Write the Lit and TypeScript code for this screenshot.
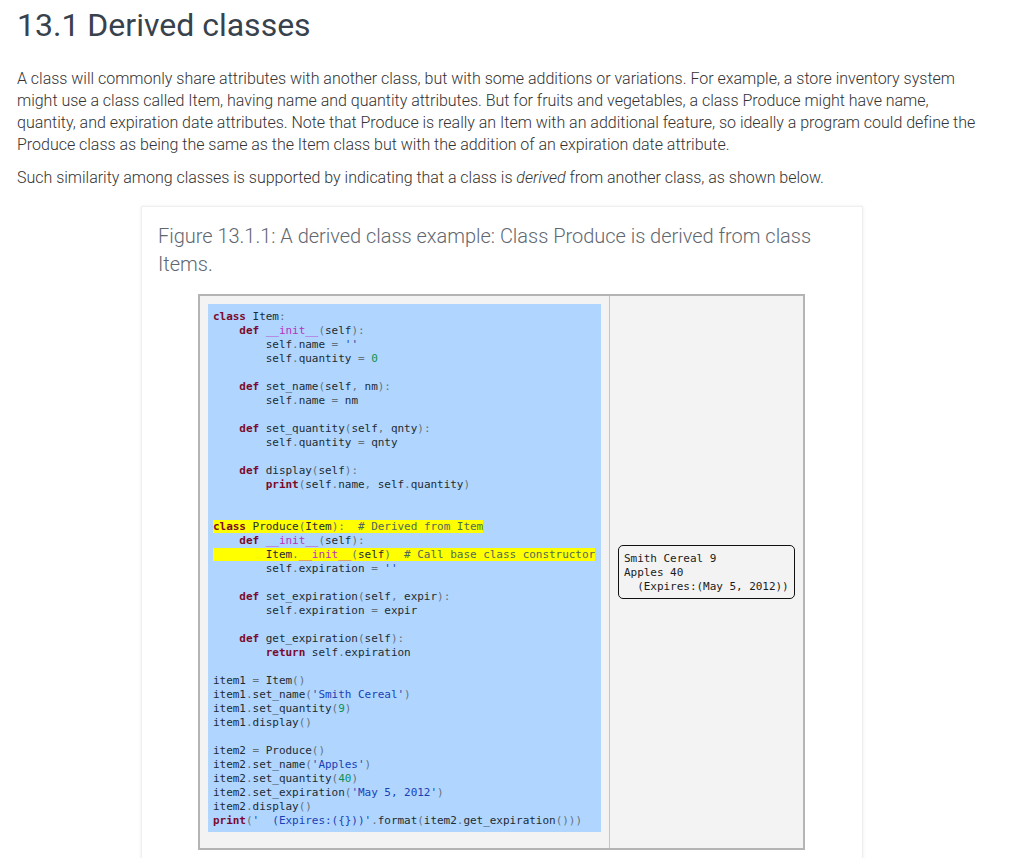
import { LitElement, html, css } from "lit";
import { customElement } from "lit/decorators.js";

const CODE = `class Item:
    def __init__(self):
        self.name = ''
        self.quantity = 0

    def set_name(self, nm):
        self.name = nm

    def set_quantity(self, qnty):
        self.quantity = qnty

    def display(self):
        print(self.name, self.quantity)


class Produce(Item):  # Derived from Item
    def __init__(self):
        Item.__init__(self)  # Call base class constructor
        self.expiration = ''

    def set_expiration(self, expir):
        self.expiration = expir

    def get_expiration(self):
        return self.expiration

item1 = Item()
item1.set_name('Smith Cereal')
item1.set_quantity(9)
item1.display()

item2 = Produce()
item2.set_name('Apples')
item2.set_quantity(40)
item2.set_expiration('May 5, 2012')
item2.display()
print('  (Expires:({}))'.format(item2.get_expiration()))`;

const HIGHLIGHTED = [15, 17];
const TOKEN =
  /(#.*$)|('[^']*')|\b(class|def|return|print)\b|(__init__)|\b(\d+)\b|([()=:,.])|(\s+|[^\s()=:,.'#]+)/g;

function tokens(line: string) {
  const out: unknown[] = [];
  for (const m of line.matchAll(TOKEN)) {
    const cls = m[1] ? "com" : m[2] ? "str" : m[3] ? "kw" : m[4] ? "mag" : m[5] ? "num" : m[6] ? "pun" : "";
    out.push(cls ? html`<span class=${cls}>${m[0]}</span>` : m[0]);
  }
  return out;
}

@customElement("app-root")
export class AppRoot extends LitElement {
  static styles = css`
    :host {
      display: block;
      height: 858px;
      overflow: hidden;
      background: #fff;
      font-family: Roboto, "Liberation Sans", sans-serif;
    }
    .page {
      padding: 0 25px 0 17px;
    }
    h1 {
      margin: 0;
      padding-top: 6px;
      font-size: 32px;
      line-height: 38px;
      font-weight: 400;
      color: #37424d;
    }
    p {
      margin: 0;
      font-size: 16px;
      line-height: 22px;
      font-weight: 300;
      letter-spacing: -0.015px;
      color: #333;
    }
    .intro {
      margin-top: 24px;
    }
    .second {
      margin-top: 11px;
    }
    i {
      font-style: italic;
    }
    .card {
      box-sizing: border-box;
      width: 722px;
      margin: 17px 0 0 124px;
      padding: 15px 16px 20px;
      background: #fff;
      border: 1px solid #efefef;
      box-shadow: 0 0 3px rgba(0, 0, 0, 0.08);
    }
    .caption {
      font-size: 20px;
      line-height: 28px;
      font-weight: 300;
      letter-spacing: -0.02px;
      color: #5f6871;
    }
    .example {
      display: flex;
      box-sizing: border-box;
      width: 607px;
      height: 556px;
      margin: 16px 0 0 40px;
      background: #f3f3f3;
      border: 2px solid #b4b4b4;
    }
    .codecell {
      box-sizing: border-box;
      width: 410px;
      padding: 8px;
      border-right: 1px solid #c4c4c4;
    }
    pre {
      margin: 0;
      font-family: "DejaVu Sans Mono", "Liberation Mono", monospace;
      font-size: 11px;
      line-height: 14px;
      letter-spacing: -0.035px;
    }
    .code {
      height: 528px;
      box-sizing: border-box;
      padding: 6px 5px 0;
      background: #b0d6ff;
      color: #1d2b33;
    }
    .line {
      display: block;
      height: 14px;
    }
    .hl {
      background: #ffff00;
    }
    .kw {
      color: #7b0a2c;
      font-weight: 700;
    }
    .mag {
      color: #b92fc4;
    }
    .str {
      color: #1a3fb5;
    }
    .num {
      color: #0f9050;
    }
    .com {
      color: #4f6a57;
    }
    .pun {
      color: #66737d;
    }
    .outcell {
      flex: 1;
      display: flex;
      align-items: center;
      padding: 0 8px;
      min-width: 0;
    }
    .output {
      box-sizing: border-box;
      width: 177px;
      height: 54px;
      margin-top: -1px;
      padding: 6px 5px;
      background: #f3f3f3;
      border: 1px solid #111;
      border-radius: 5px;
      color: #1b1b1b;
    }
  `;

  render() {
    return html`
      <div class="page">
        <h1>13.1 Derived classes</h1>
        <p class="intro">
          A class will commonly share attributes with another class, but with some additions or variations. For
          example, a store inventory system<br />might use a class called Item, having name and quantity attributes.
          But for fruits and vegetables, a class Produce might have name,<br />quantity, and expiration date
          attributes. Note that Produce is really an Item with an additional feature, so ideally a program could
          define the<br />Produce class as being the same as the Item class but with the addition of an expiration
          date attribute.
        </p>
        <p class="second">
          Such similarity among classes is supported by indicating that a class is <i>derived</i> from another class,
          as shown below.
        </p>
        <div class="card">
          <div class="caption">Figure 13.1.1: A derived class example: Class Produce is derived from class Items.</div>
          <div class="example">
            <div class="codecell">
              <pre class="code">${CODE.split("\n").map((l, i) =>
                html`<span class="line"><span class=${HIGHLIGHTED.includes(i) ? "hl" : ""}>${tokens(l)}</span></span>`
              )}</pre>
            </div>
            <div class="outcell">
              <pre class="output">Smith Cereal 9
Apples 40
  (Expires:(May 5, 2012))</pre>
            </div>
          </div>
        </div>
      </div>
    `;
  }
}
